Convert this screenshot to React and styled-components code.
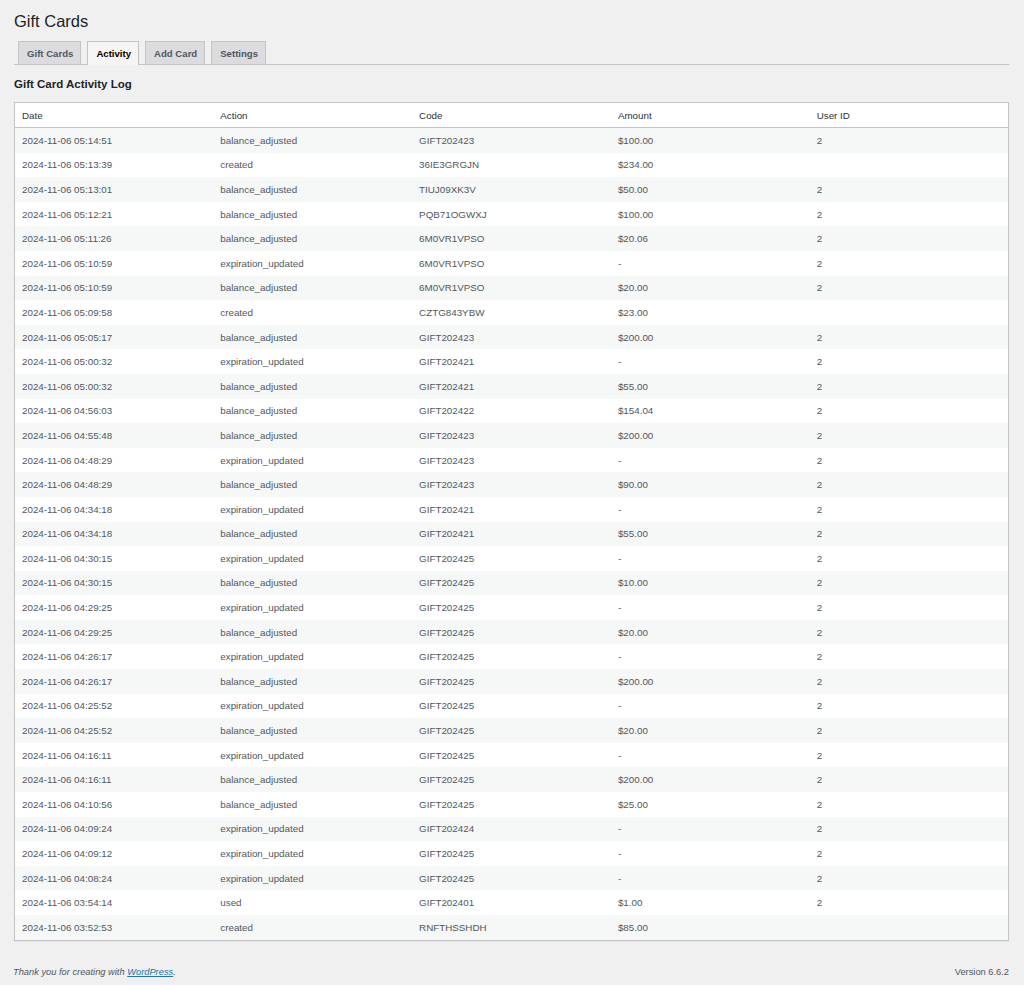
import React from 'react'
import styled, { createGlobalStyle } from 'styled-components'

const rows = [
    ['2024-11-06 05:14:51', 'balance_adjusted', 'GIFT202423', '$100.00', '2'],
    ['2024-11-06 05:13:39', 'created', '36IE3GRGJN', '$234.00', ''],
    ['2024-11-06 05:13:01', 'balance_adjusted', 'TIUJ09XK3V', '$50.00', '2'],
    ['2024-11-06 05:12:21', 'balance_adjusted', 'PQB71OGWXJ', '$100.00', '2'],
    ['2024-11-06 05:11:26', 'balance_adjusted', '6M0VR1VPSO', '$20.06', '2'],
    ['2024-11-06 05:10:59', 'expiration_updated', '6M0VR1VPSO', '-', '2'],
    ['2024-11-06 05:10:59', 'balance_adjusted', '6M0VR1VPSO', '$20.00', '2'],
    ['2024-11-06 05:09:58', 'created', 'CZTG843YBW', '$23.00', ''],
    ['2024-11-06 05:05:17', 'balance_adjusted', 'GIFT202423', '$200.00', '2'],
    ['2024-11-06 05:00:32', 'expiration_updated', 'GIFT202421', '-', '2'],
    ['2024-11-06 05:00:32', 'balance_adjusted', 'GIFT202421', '$55.00', '2'],
    ['2024-11-06 04:56:03', 'balance_adjusted', 'GIFT202422', '$154.04', '2'],
    ['2024-11-06 04:55:48', 'balance_adjusted', 'GIFT202423', '$200.00', '2'],
    ['2024-11-06 04:48:29', 'expiration_updated', 'GIFT202423', '-', '2'],
    ['2024-11-06 04:48:29', 'balance_adjusted', 'GIFT202423', '$90.00', '2'],
    ['2024-11-06 04:34:18', 'expiration_updated', 'GIFT202421', '-', '2'],
    ['2024-11-06 04:34:18', 'balance_adjusted', 'GIFT202421', '$55.00', '2'],
    ['2024-11-06 04:30:15', 'expiration_updated', 'GIFT202425', '-', '2'],
    ['2024-11-06 04:30:15', 'balance_adjusted', 'GIFT202425', '$10.00', '2'],
    ['2024-11-06 04:29:25', 'expiration_updated', 'GIFT202425', '-', '2'],
    ['2024-11-06 04:29:25', 'balance_adjusted', 'GIFT202425', '$20.00', '2'],
    ['2024-11-06 04:26:17', 'expiration_updated', 'GIFT202425', '-', '2'],
    ['2024-11-06 04:26:17', 'balance_adjusted', 'GIFT202425', '$200.00', '2'],
    ['2024-11-06 04:25:52', 'expiration_updated', 'GIFT202425', '-', '2'],
    ['2024-11-06 04:25:52', 'balance_adjusted', 'GIFT202425', '$20.00', '2'],
    ['2024-11-06 04:16:11', 'expiration_updated', 'GIFT202425', '-', '2'],
    ['2024-11-06 04:16:11', 'balance_adjusted', 'GIFT202425', '$200.00', '2'],
    ['2024-11-06 04:10:56', 'balance_adjusted', 'GIFT202425', '$25.00', '2'],
    ['2024-11-06 04:09:24', 'expiration_updated', 'GIFT202424', '-', '2'],
    ['2024-11-06 04:09:12', 'expiration_updated', 'GIFT202425', '-', '2'],
    ['2024-11-06 04:08:24', 'expiration_updated', 'GIFT202425', '-', '2'],
    ['2024-11-06 03:54:14', 'used', 'GIFT202401', '$1.00', '2'],
    ['2024-11-06 03:52:53', 'created', 'RNFTHSSHDH', '$85.00', ''],
]

const tabs = ['Gift Cards', 'Activity', 'Add Card', 'Settings']

function App() {
    return (
        <>
            <GlobalStyle />
            <Wrap>
                <Title>Gift Cards</Title>
                <TabBar>
                    {tabs.map(t => (
                        <Tab key={t} $active={t === 'Activity'}>{t}</Tab>
                    ))}
                </TabBar>
                <SubTitle>Gift Card Activity Log</SubTitle>
                <Table>
                    <thead>
                        <tr>
                            <Th>Date</Th>
                            <Th>Action</Th>
                            <Th>Code</Th>
                            <Th>Amount</Th>
                            <Th>User ID</Th>
                        </tr>
                    </thead>
                    <tbody>
                        {rows.map((r, i) => (
                            <Row key={i} $striped={i % 2 === 0}>
                                {r.map((c, j) => <Td key={j}>{c}</Td>)}
                            </Row>
                        ))}
                    </tbody>
                </Table>
            </Wrap>
            <Footer>
                <Thanks>Thank you for creating with <a href="#">WordPress</a>.</Thanks>
                <Version>Version 6.6.2</Version>
            </Footer>
        </>
    )
}

export default App

const GlobalStyle = createGlobalStyle`
    html, body {
        margin:0;
        padding:0;
        background:#f0f0f1;
        font-family:"Liberation Sans", Arial, sans-serif;
        color:#3c434a;
    }
`

const Wrap = styled.div`
    padding: 10px 15px 0 14px;
`

const Title = styled.h1`
    margin:0;
    font-size:16.5px;
    font-weight:400;
    color:#1d2327;
    line-height:22px;
`

const TabBar = styled.div`
    display:flex;
    gap:6px;
    margin-top:8px;
    padding-left:4px;
    border-bottom:1px solid #c3c4c7;
    height:24px;
`

const Tab = styled.div`
    height:23px;
    box-sizing:border-box;
    padding:0 7px 0 8px;
    display:flex;
    align-items:center;
    font-size:9.6px;
    font-weight:700;
    border:1px solid #c3c4c7;
    border-bottom:none;
    background:${p => p.$active ? '#f5f5f5' : '#dcdcde'};
    color:${p => p.$active ? '#000' : '#50575e'};
    margin-top:1px;
    ${p => p.$active && 'height:24px; margin-bottom:-1px;'}
`

const SubTitle = styled.h2`
    margin:11px 0 10px;
    font-size:11.5px;
    font-weight:700;
    color:#1d2327;
    line-height:16px;
`

const Table = styled.table`
    width:100%;
    border-collapse:collapse;
    table-layout:fixed;
    background:#fff;
    border:1px solid #c3c4c7;
    box-shadow:0 1px 1px rgba(0,0,0,0.04);
    font-size:9.8px;
`

const Th = styled.th`
    text-align:left;
    font-weight:400;
    color:#2c3338;
    height:24px;
    padding:0 7px;
    border-bottom:1px solid #c3c4c7;
`

const Row = styled.tr`
    background:${p => p.$striped ? '#f6f7f7' : '#fff'};
`

const Td = styled.td`
    height:24.6px;
    padding:0 7px;
    color:#50575e;
    white-space:nowrap;
`

const Footer = styled.div`
    display:flex;
    justify-content:space-between;
    align-items:center;
    padding: 26px 15px 0 13px;
    font-size:9.3px;
    color:#50575e;
`

const Thanks = styled.span`
    font-style:italic;

    a {
        color:#2271b1;
        text-decoration:underline;
    }
`

const Version = styled.span``
